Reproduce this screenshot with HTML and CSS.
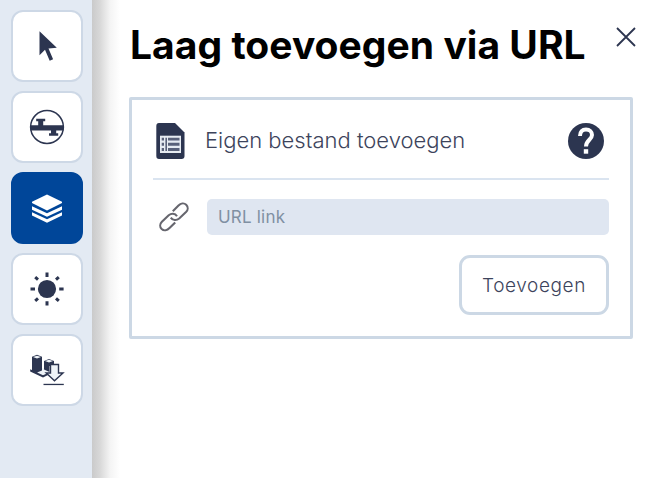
FILE: index.html
```html
<!DOCTYPE html>
<html lang="nl">
<head>
<meta charset="utf-8">
<title>Laag toevoegen via URL</title>
<link rel="stylesheet" href="styles.css">
</head>
<body>
<div class="app">
  <nav class="toolbar">
    <button class="tool" aria-label="Selecteren">
      <svg width="72" height="72" viewBox="0 0 72 72"><path d="M28.5 21.3V45.2L34 39.8L38.7 50.8L42.1 49.3L37.5 38.4L45.8 37.8Z"/></svg>
    </button>
    <button class="tool" aria-label="Ondergrond">
      <svg width="72" height="72" viewBox="0 0 72 72"><circle cx="36" cy="36" r="16.4" fill="none" stroke="#2c3550" stroke-width="1.5"/><path d="M19.5 34.2H27.2V30.2H25.2V27.8H34.2V30.2H32.2V34.2H52.5V39.5H45.2V42.2H47.2V44.8H38V42.2H40V39.5H19.5Z"/></svg>
    </button>
    <button class="tool tool-active" aria-label="Lagen">
      <svg width="72" height="72" viewBox="0 0 72 72"><path d="M36 22.5L51 29.8V31L36 38.5L21 31V29.8ZM21 34.3L36 41.3L51 34.3V37.7L36 44.8L21 37.7ZM21 40.3L36 47.2L51 40.3V43.6L36 50.7L21 43.6Z"/></svg>
    </button>
    <button class="tool" aria-label="Zon">
      <svg width="72" height="72" viewBox="0 0 72 72"><circle cx="36" cy="36" r="9.1"/><path class="rays" d="M36 19.5V24M36 48.2V52.6M19.5 36H24M48.2 36H52.6M24.2 24.2L27 26.7M47.8 24.2L45 26.7M24.2 47.8L27 45.3M47.8 47.8L45 45.3"/></svg>
    </button>
    <button class="tool" aria-label="Downloaden">
      <svg width="72" height="72" viewBox="0 0 72 72"><path d="M19.8 36L27 33L46 38L32 42.7Z" fill="#eef3f8"/><path d="M19.2 35.2L32 41.2L37 39V41L32 43.4L19.2 37.6ZM21 22.8L26 20.8L31 22.8V36.6L26 38.6L21 36.6ZM33 27L38 25L43 27V32H38.5V38L33 35.5Z"/><path d="M22 23L26 21.7L30 23L26 24.6ZM34 27L38 25.7L42 27L38 28.6Z" fill="#eef3f8"/><path d="M39.5 30.5H47.5V39H52L43.5 46.7L35.2 39H39.5Z" fill="#eef3f8" stroke="#2c3550" stroke-width="1.4"/><path d="M32.5 49.8H52.8V51.1H32.5Z"/></svg>
    </button>
  </nav>
  <main class="content">
    <header class="heading">
      <h1>Laag toevoegen via URL</h1>
      <button class="close" aria-label="Sluiten"><svg width="20" height="20" viewBox="0 0 20 20"><path d="M1 1L19 19M19 1L1 19"/></svg></button>
    </header>
    <section class="card">
      <div class="card-head">
        <svg class="file" width="29" height="36" viewBox="0 0 29 36"><path d="M3 0H19L28.5 9.5V33Q28.5 36 25.5 36H3Q.3 36 .3 33V3Q.3 0 3 0Z"/><path d="M4 12.7H25V30H4Z" fill="#e6ebf2"/><path class="cells" d="M5.7 14.7H8V17.4H5.7ZM5.7 19.8H8V22.7H5.7ZM5.7 25H8V28H5.7ZM9.4 14.7H11V28H9.4ZM12 14.7H23.5V17.4H12ZM12 19.8H23.5V22.7H12ZM12 25H23.5V28H12Z"/></svg>
        <span class="card-title">Eigen bestand toevoegen</span>
        <svg class="help" width="36" height="36" viewBox="0 0 36 36"><circle cx="18" cy="18" r="18"/><path d="M12 13C12 8.6 14.3 6.6 18 6.6C21.8 6.6 24 9 24 12C24 16.6 18 17.2 18 23.4" fill="none" stroke="#fff" stroke-width="4"/><path d="M15.8 26.2H20.2V30.7H15.8Z" fill="#fff"/></svg>
      </div>
      <div class="url-row">
        <svg class="link" width="32" height="32" viewBox="0 0 32 32"><path d="M14.8 10.3L20.5 4.6C22.8 2.2 26 1.7 28.2 3.7C30.3 5.8 30.1 9 28 11.1L21.2 17.5C18.6 19.7 14.8 19.7 12.8 16.6"/><path d="M17.2 21.4L11.5 27.1C9.2 29.5 5.8 30.1 3.7 28.1C1.6 26 1.8 22.9 3.9 20.8L10.7 14.3C13.3 12.1 17 12.1 19 15.2"/></svg>
        <input class="url" type="text" placeholder="URL link" aria-label="URL link">
      </div>
      <button class="submit">Toevoegen</button>
    </section>
  </main>
</div>
</body>
</html>
```
FILE: styles.css
```css
* { box-sizing: border-box; }
body { margin: 0; background: #fff; font-family: Inter, "Liberation Sans", sans-serif; color: #2c3550; }
button { padding: 0; border: 0; background: none; font-family: inherit; color: inherit; }
svg { display: block; fill: #2c3550; }
.app { display: flex; width: 660px; height: 478px; overflow: hidden; }
.toolbar { width: 92px; padding: 10px 0 0 11px; display: flex; flex-direction: column; gap: 9px; background: #e3eaf3; flex: none; }
.tool { width: 72px; height: 72px; border: 2px solid #cdd8e6; border-radius: 12px; background: #fff; display: flex; align-items: center; justify-content: center; }
.tool svg { flex: none; }
.tool-active { background: #004699; border-color: #004699; }
.tool-active svg { fill: #fff; }
.rays { stroke: #2c3550; stroke-width: 3; fill: none; }
.content { flex: 1; padding: 17px 27px 0 37px; background: linear-gradient(to right, #cacaca, #d8d8d8 8px, #f4f4f4 18px, #fff 28px); }
.heading { display: flex; justify-content: space-between; height: 80px; }
h1 { margin: 0 0 0 1px; font-size: 39px; line-height: 56px; font-weight: 650; letter-spacing: .04px; color: #000; white-space: nowrap; }
.close { width: 20px; height: 20px; margin: 10px -3px 0 0; }
.close path { stroke: #2c3550; stroke-width: 1.8; }
.card { width: 504px; height: 242px; padding: 0 21px; border: 3px solid #ccd8e5; border-radius: 2px; background: #fff; display: flex; flex-direction: column; }
.card-head { height: 80px; padding: 4px 5px 0 3px; border-bottom: 2px solid #dae4f0; display: flex; align-items: center; }
.cells { fill: #59617a; }
.card-title { flex: 1; margin: -2px 0 0 20px; font-size: 22px; font-weight: 300; letter-spacing: 0; color: #3d445c; white-space: nowrap; }
.url-row { display: flex; margin-top: 19px; }
.link { margin: 2px 17px 0 5px; fill: none; stroke: #66666e; stroke-width: 2.1; flex: none; }
.url { flex: 1; min-width: 0; height: 36px; padding: 0 11px; border: 0; border-radius: 5px; background: #dfe6f1; font: 400 17px Inter, sans-serif; letter-spacing: .2px; }
.url::placeholder { color: #8090a3; opacity: 1; }
.submit { width: 150px; height: 60px; margin-top: 20px; align-self: flex-end; border: 3px solid #ccd8e5; border-radius: 11px; font-size: 19px; font-weight: 300; letter-spacing: .6px; color: #3d445c; }
```
